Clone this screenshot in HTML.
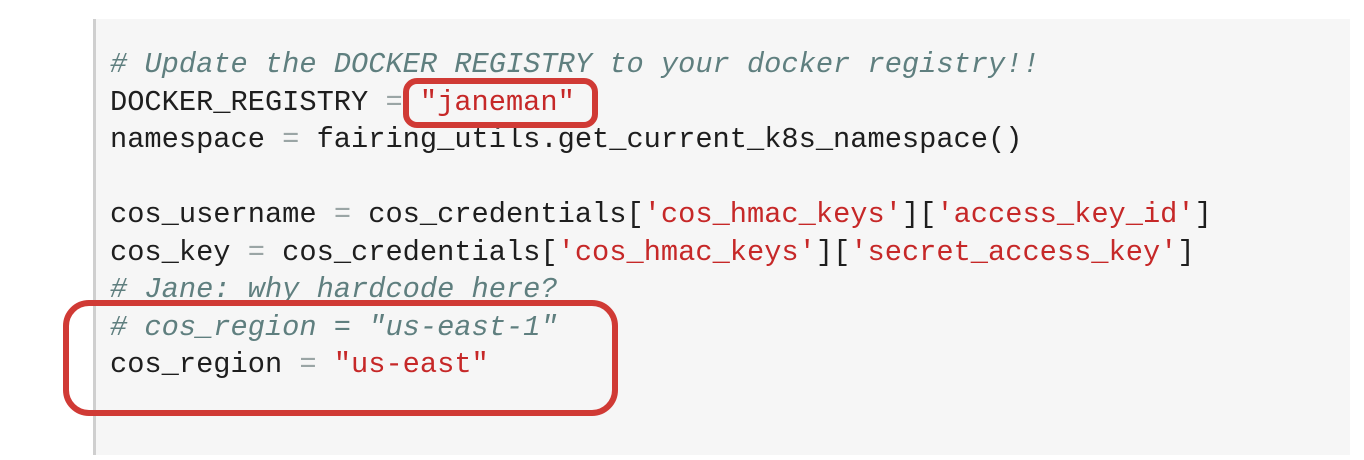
<!DOCTYPE html>
<html><head><style>
html,body{margin:0;padding:0;background:#fff;width:1364px;height:460px;overflow:hidden;position:relative}
.panel{position:absolute;left:93px;top:19px;width:1257px;height:436px;background:#f6f6f6;border-left:3px solid #cfcfcf;box-sizing:border-box}
.code{position:absolute;left:110px;top:46px;font-family:"Liberation Mono",monospace;font-size:28.7px;line-height:37.5px;color:#1e1e1e;white-space:pre;margin:0}
.c{color:#5f7f7f;font-style:italic}
.s{color:#c62828}
.o{color:#9aa5a5}
.box{position:absolute;border:6px solid #d03a35;box-sizing:border-box}
</style></head><body>
<div class="panel"></div>
<pre class="code"><span class="c"># Update the DOCKER REGISTRY to your docker registry!!</span>
DOCKER_REGISTRY <span class="o">=</span> <span class="s">"janeman"</span>
namespace <span class="o">=</span> fairing_utils.get_current_k8s_namespace()

cos_username <span class="o">=</span> cos_credentials[<span class="s">'cos_hmac_keys'</span>][<span class="s">'access_key_id'</span>]
cos_key <span class="o">=</span> cos_credentials[<span class="s">'cos_hmac_keys'</span>][<span class="s">'secret_access_key'</span>]
<span class="c"># Jane: why hardcode here?</span>
<span class="c"># cos_region = "us-east-1"</span>
cos_region <span class="o">=</span> <span class="s">"us-east"</span></pre>
<div class="box" style="left:403px;top:78px;width:195px;height:50px;border-radius:14px"></div>
<div class="box" style="left:63px;top:300px;width:555px;height:116px;border-radius:26px"></div>
</body></html>
